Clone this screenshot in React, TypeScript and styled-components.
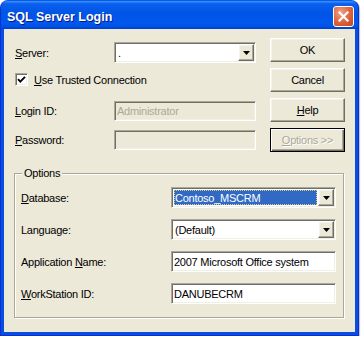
import styled, { createGlobalStyle, css } from "styled-components";

const GlobalStyle = createGlobalStyle`
  html, body {
    margin: 0;
    padding: 0;
    background: #fff;
  }
  body {
    font-family: "Liberation Sans", Arial, sans-serif;
    font-size: 11px;
    letter-spacing: -0.25px;
    color: #000;
  }
`;

const sunken = css`
  border: 1px solid;
  border-color: #aca899 #fff #fff #aca899;
  box-shadow: inset 1px 1px 0 #716f64, inset -1px -1px 0 #f1efe2;
`;

const raised = css`
  border: 1px solid;
  border-color: #fff #716f64 #716f64 #fff;
  box-shadow: inset -1px -1px 0 #aca899, inset 1px 1px 0 #f5f4ea;
`;

const Window = styled.div`
  box-sizing: border-box;
  width: 359px;
  height: 336px;
  display: flex;
  flex-direction: column;
  background: #0a4ee0;
  border: 1px solid #0831d9;
  border-top-color: #0a5ae8;
  border-radius: 8px 8px 0 0;
  box-shadow: 1px 1px 1px rgba(0, 0, 0, 0.25);
`;

const TitleBar = styled.div`
  height: 28px;
  display: flex;
  align-items: flex-start;
  padding: 0 4px 0 6px;
  border-radius: 7px 7px 0 0;
  background: linear-gradient(
    to bottom,
    #3d95ff 0%,
    #0a5fee 10%,
    #0055e5 45%,
    #0058ee 80%,
    #0050e0 92%,
    #003dd0 100%
  );
`;

const Title = styled.div`
  color: #fff;
  font-weight: bold;
  font-size: 12.5px;
  letter-spacing: 0;
  line-height: 28px;
  padding-top: 2px;
  text-shadow: 1px 1px 0 #0a1883;
`;

const CloseButton = styled.div`
  box-sizing: border-box;
  width: 21px;
  height: 21px;
  margin: 5px 0 0 auto;
  border: 1px solid #fff;
  border-radius: 3px;
  background: radial-gradient(circle at 35% 30%, #f0a38a 0%, #e26a44 45%, #c2441e 100%);
  display: flex;
  align-items: center;
  justify-content: center;
`;

const Client = styled.div`
  flex: 1;
  margin: 0 3px 3px;
  background: #ece9d8;
  display: flex;
  flex-direction: column;
`;

const Top = styled.div`
  display: flex;
  gap: 14px;
  padding: 9px 10px 0 11px;
`;

const Fields = styled.div`
  width: 241px;
  padding-top: 4px;
  display: flex;
  flex-direction: column;
`;

const Row = styled.div<{ $h: number; $mt?: number; $label?: number }>`
  display: grid;
  grid-template-columns: ${({ $label }) => $label ?? 99}px 1fr;
  align-items: center;
  height: ${({ $h }) => $h}px;
  margin-top: ${({ $mt }) => $mt ?? 0}px;
`;

const Label = styled.span<{ $disabled?: boolean }>`
  white-space: nowrap;
  color: ${({ $disabled }) => ($disabled ? "#aca899" : "#000")};
`;

const U = styled.span`
  text-decoration: underline;
`;

const Field = styled.div<{ $h: number; $disabled?: boolean }>`
  ${sunken};
  box-sizing: border-box;
  height: ${({ $h }) => $h}px;
  background: ${({ $disabled }) => ($disabled ? "#ece9d8" : "#fff")};
  color: ${({ $disabled }) => ($disabled ? "#aca899" : "#000")};
  display: flex;
  align-items: center;
  padding-left: 2px;
  white-space: nowrap;
  overflow: hidden;
`;

const Combo = styled.div<{ $h: number }>`
  ${sunken};
  box-sizing: border-box;
  height: ${({ $h }) => $h}px;
  background: #fff;
  display: flex;
  padding: 1px;
`;

const ComboValue = styled.div<{ $selected?: boolean }>`
  flex: 1;
  display: flex;
  align-items: center;
  margin: 1px;
  padding-left: 1px;
  white-space: nowrap;
  ${({ $selected }) =>
    $selected &&
    css`
      background: #316ac5;
      color: #fff;
      outline: 1px dotted #d9c98c;
      outline-offset: -1px;
    `}
`;

const DropButton = styled.div`
  ${raised};
  box-sizing: border-box;
  width: 16px;
  background: #ece9d8;
  display: flex;
  align-items: center;
  justify-content: center;
`;

const CheckRow = styled.label`
  display: flex;
  align-items: center;
  gap: 6px;
  height: 17px;
  margin-top: 8px;
`;

const CheckBox = styled.span`
  ${sunken};
  box-sizing: border-box;
  width: 13px;
  height: 13px;
  background: #fff;
  display: flex;
  align-items: center;
  justify-content: center;
`;

const Buttons = styled.div`
  width: 75px;
  display: flex;
  flex-direction: column;
  gap: 6px;
`;

const Button = styled.div<{ $default?: boolean; $disabled?: boolean }>`
  ${raised};
  box-sizing: border-box;
  height: 24px;
  background: #ece9d8;
  display: flex;
  align-items: center;
  justify-content: center;
  color: ${({ $disabled }) => ($disabled ? "#aca899" : "#000")};
  text-shadow: ${({ $disabled }) => ($disabled ? "1px 1px 0 #fff" : "none")};
  ${({ $default }) =>
    $default &&
    css`
      border: 1px solid #000;
      box-shadow: inset 1px 1px 0 #fff, inset -1px -1px 0 #716f64,
        inset -2px -2px 0 #aca899;
    `}
`;

const Group = styled.div`
  margin: 21px 11px 0 10px;
  border: 1px solid #aca899;
  box-shadow: inset 1px 1px 0 #fff, 1px 1px 0 #fff;
  padding: 0 7px 13px 6px;
  display: flex;
  flex-direction: column;
`;

const GroupTitle = styled.div`
  align-self: flex-start;
  margin: -7px 0 0 1px;
  padding: 0 2px;
  line-height: 13px;
  background: #ece9d8;
`;

const GroupRows = styled.div`
  display: flex;
  flex-direction: column;
  gap: 11px;
  padding-top: 7px;
`;

function Arrow() {
  return (
    <svg width="7" height="4" viewBox="0 0 7 4">
      <path d="M0 0 H7 L3.5 4 Z" fill="#000" />
    </svg>
  );
}

export default function App() {
  return (
    <>
      <GlobalStyle />
      <Window>
        <TitleBar>
          <Title>SQL Server Login</Title>
          <CloseButton>
            <svg width="11" height="11" viewBox="0 0 11 11">
              <path
                d="M1.5 1.5 L9.5 9.5 M9.5 1.5 L1.5 9.5"
                stroke="#fff"
                strokeWidth="2.2"
                strokeLinecap="square"
              />
            </svg>
          </CloseButton>
        </TitleBar>
        <Client>
          <Top>
            <Fields>
              <Row $h={21}>
                <Label>
                  <U>S</U>erver:
                </Label>
                <Combo $h={21}>
                  <ComboValue>.</ComboValue>
                  <DropButton>
                    <Arrow />
                  </DropButton>
                </Combo>
              </Row>
              <CheckRow>
                <CheckBox>
                  <svg width="9" height="9" viewBox="0 0 9 9">
                    <path
                      d="M1 4.2 L3.3 6.6 L8 1.8"
                      stroke="#000"
                      strokeWidth="1.9"
                      fill="none"
                    />
                  </svg>
                </CheckBox>
                <span>
                  <U>U</U>se Trusted Connection
                </span>
              </CheckRow>
              <Row $h={20} $mt={13}>
                <Label>
                  <U>L</U>ogin ID:
                </Label>
                <Field $h={20} $disabled>
                  Administrator
                </Field>
              </Row>
              <Row $h={20} $mt={9}>
                <Label>
                  <U>P</U>assword:
                </Label>
                <Field $h={20} $disabled />
              </Row>
            </Fields>
            <Buttons>
              <Button>OK</Button>
              <Button>Cancel</Button>
              <Button>
                <span>
                  <U>H</U>elp
                </span>
              </Button>
              <Button $default $disabled>
                <span>
                  <U>O</U>ptions &gt;&gt;
                </span>
              </Button>
            </Buttons>
          </Top>
          <Group>
            <GroupTitle>Options</GroupTitle>
            <GroupRows>
              <Row $h={21} $label={150}>
                <Label>
                  <U>D</U>atabase:
                </Label>
                <Combo $h={21}>
                  <ComboValue $selected>Contoso_MSCRM</ComboValue>
                  <DropButton>
                    <Arrow />
                  </DropButton>
                </Combo>
              </Row>
              <Row $h={21} $label={150}>
                <Label>Language:</Label>
                <Combo $h={21}>
                  <ComboValue>(Default)</ComboValue>
                  <DropButton>
                    <Arrow />
                  </DropButton>
                </Combo>
              </Row>
              <Row $h={21} $label={150}>
                <Label>
                  Application <U>N</U>ame:
                </Label>
                <Field $h={21}>2007 Microsoft Office system</Field>
              </Row>
              <Row $h={21} $label={150}>
                <Label>
                  <U>W</U>orkStation ID:
                </Label>
                <Field $h={21}>DANUBECRM</Field>
              </Row>
            </GroupRows>
          </Group>
        </Client>
      </Window>
    </>
  );
}
